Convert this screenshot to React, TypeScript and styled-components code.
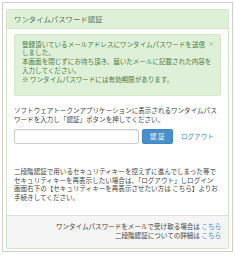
import React from 'react';
import styled, { createGlobalStyle } from 'styled-components';

const GlobalStyle = createGlobalStyle`
    html, body {
        margin: 0;
        padding: 0;
        background: #fff;
    }
    body {
        font-family: "Noto Sans CJK JP", "Noto Sans", sans-serif;
        color: #444;
    }
`;

const Frame = styled.div`
    margin: 2px;
    border: 1px solid #cfcfcf;
    padding: 6px 3px 2px;
`;

const Panel = styled.div`
    border: 1px solid #d6e9c6;
    border-radius: 2px;
    background: #fff;
    overflow: hidden;
`;

const PanelHeading = styled.div`
    background: #dff0d8;
    border-bottom: 1px solid #d6e9c6;
    color: #5b7356;
    font-size: 7.4px;
    line-height: 9.5px;
    padding: 4px 7px;
`;

const PanelBody = styled.div`
    padding: 5px 7px 13.5px;
`;

const Alert = styled.div`
    position: relative;
    background: #dff0d8;
    border: 1px solid #d6e9c6;
    border-radius: 2px;
    color: #4a7d45;
    font-size: 6.55px;
    line-height: 8.75px;
    padding: 5px 16px 12px 7px;
    margin-bottom: 9.5px;
    white-space: nowrap;
`;

const CloseButton = styled.span`
    position: absolute;
    right: 6px;
    top: 5px;
    color: #a6b9a1;
    font-size: 7px;
    line-height: 9px;
    font-family: "DejaVu Sans", sans-serif;
`;

const Text = styled.p<{ $lh?: number; $mt?: number }>`
    margin: ${props => props.$mt || 0}px 0 0;
    font-size: 6.55px;
    line-height: ${props => props.$lh || 9}px;
    white-space: nowrap;
`;

const FormRow = styled.div`
    display: flex;
    align-items: center;
    margin-top: 5px;
    height: 15px;
`;

const Input = styled.input`
    box-sizing: border-box;
    width: 124.5px;
    height: 15px;
    border: 1px solid #ccc;
    border-radius: 2px;
    padding: 0 3px;
    margin: 0;
    font-size: 6.5px;
    box-shadow: inset 0 1px 1px rgba(0, 0, 0, 0.075);
`;

const Button = styled.button`
    box-sizing: border-box;
    margin-left: 3.5px;
    width: 30.5px;
    height: 15px;
    padding: 0 0 0 1.5px;
    border: 1px solid #3f86c4;
    border-radius: 2px;
    background: #4a8fcc;
    color: #fff;
    font-family: "Noto Sans CJK JP", sans-serif;
    font-size: 6.5px;
    line-height: 13px;
    letter-spacing: 1.5px;
`;

const Link = styled.a`
    color: #428bca;
    text-decoration: none;
`;

const LogoutLink = styled(Link)`
    margin-left: 8.5px;
    font-size: 6.55px;
    line-height: 9px;
`;

const PanelFooter = styled.div`
    background: #f5f5f5;
    border-top: 1px solid #ddd;
    padding: 6px 7px 8px;
    text-align: right;
    font-size: 6.55px;
    line-height: 9px;
    white-space: nowrap;
`;

export default function App() {
    return (
        <>
            <GlobalStyle />
            <Frame>
                <Panel>
                    <PanelHeading>ワンタイムパスワード認証</PanelHeading>
                    <PanelBody>
                        <Alert>
                            <CloseButton>×</CloseButton>
                            登録頂いているメールアドレスにワンタイムパスワードを送信
                            <br />
                            しました。
                            <br />
                            本画面を閉じずにお待ち頂き、届いたメールに記載された内容を
                            <br />
                            入力してください。
                            <br />※ ワンタイムパスワードには有効期限があります。
                        </Alert>
                        <Text>
                            ソフトウェアトークンアプリケーションに表示されるワンタイムパス
                            <br />
                            ワードを入力し「認証」ボタンを押してください。
                        </Text>
                        <FormRow>
                            <Input type="text" />
                            <Button>認証</Button>
                            <LogoutLink href="#">ログアウト</LogoutLink>
                        </FormRow>
                        <Text $lh={8.5} $mt={23.5}>
                            二段階認証で用いるセキュリティキーを控えずに進んでしまった等で
                            <br />
                            セキュリティキーを再表示したい場合は、「ログアウト」しログイン
                            <br />
                            画面右下の【セキュリティキーを再表示させたい方は こちら】よりお
                            <br />
                            手続きしてください。
                        </Text>
                    </PanelBody>
                    <PanelFooter>
                        ワンタイムパスワードをメールで受け取る場合は <Link href="#">こちら</Link>
                        <br />
                        二段階認証についての詳細は <Link href="#">こちら</Link>
                    </PanelFooter>
                </Panel>
            </Frame>
        </>
    );
}
